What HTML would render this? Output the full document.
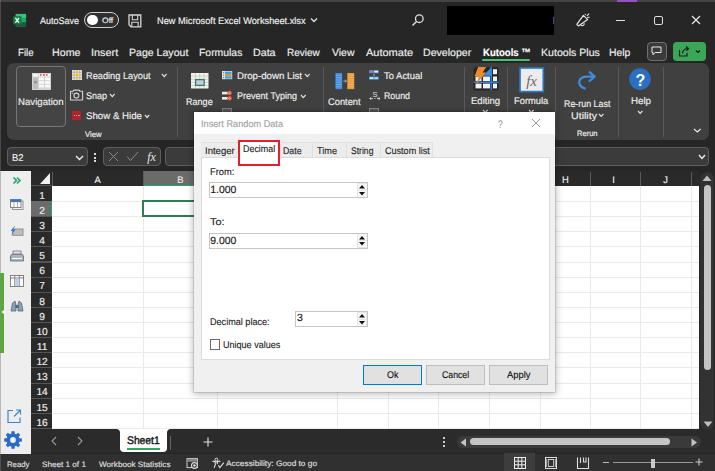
<!DOCTYPE html><html><head><meta charset="utf-8"><style>
html,body{margin:0;padding:0;width:715px;height:471px;overflow:hidden;background:#262626}
body{position:relative;font-family:"Liberation Sans",sans-serif}
.t{position:absolute;white-space:nowrap;transform-origin:0 0;text-rendering:geometricPrecision}
.r{position:absolute}
svg.r{overflow:visible}
</style></head><body>
<div class="r" style="left:0px;top:0px;width:715px;height:63px;background:#262626"></div>
<div class="r" style="left:0px;top:0px;width:715px;height:1.6px;background:#444"></div>
<div class="r" style="left:617px;top:0px;width:20px;height:1.6px;background:#9a50c0"></div>
<svg class="r" style="left:13px;top:13px" width="14" height="14" viewBox="0 0 14 14"><rect x="2.7" y="0.9" width="10.4" height="12.5" rx="0.8" fill="#21a366"/><rect x="2.7" y="0.9" width="10.4" height="4.2" fill="#33c481"/><rect x="2.7" y="9.2" width="10.4" height="4.2" fill="#185c37"/><rect x="0.1" y="3.2" width="8.4" height="8.1" rx="0.6" fill="#107c41"/><path d="M2.4 5 L6 9.6 M6 5 L2.4 9.6" stroke="#fff" stroke-width="1.3"/></svg>
<div class="t" style="left:39.80px;top:17px;font-size:9.63px;line-height:9.63px;color:#ececec;transform:scaleX(0.934);-webkit-text-stroke:0.18px #ececec;">AutoSave</div>
<div class="r" style="left:84px;top:12.2px;width:34.5px;height:15.4px;border:1.3px solid #cfcfcf;border-radius:8px;box-sizing:border-box;background:#2f2f2f"></div>
<div class="r" style="left:87px;top:14.6px;width:10.6px;height:10.6px;background:#fff;border-radius:50%"></div>
<div class="t" style="left:101.80px;top:17px;font-size:7.76px;line-height:7.76px;color:#ececec;transform:scaleX(1.103);-webkit-text-stroke:0.18px #ececec;">Off</div>
<svg class="r" style="left:127.5px;top:13.5px" width="14" height="14" viewBox="0 0 14 14"><path d="M1 1 H12.8 V12.8 H3 L1 10.8 Z" fill="none" stroke="#d8d8d8" stroke-width="1.3"/><path d="M4.3 1 V5.8 H9.7 V1" fill="none" stroke="#d8d8d8" stroke-width="1.1"/><path d="M3.8 12.8 V8.2 H10.2 V12.8" fill="none" stroke="#d8d8d8" stroke-width="1.1"/></svg>
<div class="t" style="left:157.30px;top:17px;font-size:9.63px;line-height:9.63px;color:#ececec;transform:scaleX(0.959);-webkit-text-stroke:0.18px #ececec;">New Microsoft Excel Worksheet.xlsx</div>
<svg class="r" style="left:310px;top:17px" width="8" height="6" viewBox="0 0 8 6"><path d="M1 1.5 L4 4.5 L7 1.5" fill="none" stroke="#e0e0e0" stroke-width="1.3"/></svg>
<svg class="r" style="left:411px;top:13px" width="14" height="14" viewBox="0 0 14 14"><circle cx="8.3" cy="5.7" r="3.8" fill="none" stroke="#e0e0e0" stroke-width="1.3"/><path d="M5.5 8.5 L1.5 12.5" stroke="#e0e0e0" stroke-width="1.5"/></svg>
<div class="r" style="left:446.5px;top:6.3px;width:107px;height:28.5px;background:#000"></div>
<div class="r" style="left:553px;top:17px;width:1px;height:7px;background:#4a3ab8"></div>
<svg class="r" style="left:570px;top:8px" width="26" height="24" viewBox="570 8 26 24"><path d="M576.8 24.4 L583.4 15.4 L587.7 19.6 L578.4 25.9 Z" fill="none" stroke="#e6e6e6" stroke-width="1.2" stroke-linejoin="round"/><path d="M580.6 24.6 A1.8 1.8 0 0 0 584 23.2" fill="none" stroke="#e6e6e6" stroke-width="1.1"/><path d="M585.2 14.2 L585.4 14.6 M587.2 15.6 L588.8 13.8 M587.6 17.5 L589.2 17.3" stroke="#e6e6e6" stroke-width="1.1" stroke-linecap="round"/></svg>
<div class="r" style="left:616px;top:19.6px;width:8.5px;height:1.2px;background:#e0e0e0"></div>
<div class="r" style="left:653.5px;top:16px;width:9px;height:9px;border:1.2px solid #e0e0e0;border-radius:2px;box-sizing:border-box"></div>
<svg class="r" style="left:691px;top:15px" width="10" height="10" viewBox="0 0 10 10"><path d="M1 1 L9 9 M9 1 L1 9" stroke="#e8e8e8" stroke-width="1.2"/></svg>
<div class="t" style="left:17.50px;top:49px;font-size:10.43px;line-height:10.43px;color:#ececec;transform:scaleX(0.929);-webkit-text-stroke:0.18px #ececec;">File</div>
<div class="t" style="left:52.00px;top:49px;font-size:10.43px;line-height:10.43px;color:#ececec;transform:scaleX(1.023);-webkit-text-stroke:0.18px #ececec;">Home</div>
<div class="t" style="left:91.30px;top:49px;font-size:10.43px;line-height:10.43px;color:#ececec;transform:scaleX(1.043);-webkit-text-stroke:0.18px #ececec;">Insert</div>
<div class="t" style="left:129.20px;top:49px;font-size:10.43px;line-height:10.43px;color:#ececec;transform:scaleX(1.014);-webkit-text-stroke:0.18px #ececec;">Page Layout</div>
<div class="t" style="left:199.40px;top:49px;font-size:10.43px;line-height:10.43px;color:#ececec;transform:scaleX(0.998);-webkit-text-stroke:0.18px #ececec;">Formulas</div>
<div class="t" style="left:253.40px;top:49px;font-size:10.43px;line-height:10.43px;color:#ececec;transform:scaleX(1.025);-webkit-text-stroke:0.18px #ececec;">Data</div>
<div class="t" style="left:287.40px;top:49px;font-size:10.43px;line-height:10.43px;color:#ececec;transform:scaleX(0.959);-webkit-text-stroke:0.18px #ececec;">Review</div>
<div class="t" style="left:331.50px;top:49px;font-size:10.43px;line-height:10.43px;color:#ececec;transform:scaleX(1.003);-webkit-text-stroke:0.18px #ececec;">View</div>
<div class="t" style="left:365.50px;top:49px;font-size:10.43px;line-height:10.43px;color:#ececec;transform:scaleX(1.055);-webkit-text-stroke:0.18px #ececec;">Automate</div>
<div class="t" style="left:423.30px;top:49px;font-size:10.43px;line-height:10.43px;color:#ececec;transform:scaleX(1.016);-webkit-text-stroke:0.18px #ececec;">Developer</div>
<div class="t" style="left:540.70px;top:49px;font-size:10.43px;line-height:10.43px;color:#ececec;transform:scaleX(1.017);-webkit-text-stroke:0.18px #ececec;">Kutools Plus</div>
<div class="t" style="left:609.30px;top:49px;font-size:10.43px;line-height:10.43px;color:#ececec;transform:scaleX(0.998);-webkit-text-stroke:0.18px #ececec;">Help</div>
<div class="t" style="left:482.80px;top:49px;font-size:10.43px;line-height:10.43px;color:#ffffff;font-weight:bold;transform:scaleX(0.919);-webkit-text-stroke:0.18px #ffffff;">Kutools ™</div>
<div class="r" style="left:482.2px;top:59.2px;width:48px;height:2.1px;background:#48bf6e;border-radius:1px"></div>
<div class="r" style="left:646.5px;top:41.5px;width:20px;height:19px;border:1.2px solid #707070;border-radius:4px;box-sizing:border-box;background:#3b3b3b"></div>
<svg class="r" style="left:651px;top:46px" width="11" height="10" viewBox="0 0 11 10"><path d="M1 1 H10 V6.5 H4 L2 8.8 V6.5 H1 Z" fill="none" stroke="#e8e8e8" stroke-width="1"/></svg>
<div class="r" style="left:673px;top:41.8px;width:32.5px;height:19px;background:#3aa757;border-radius:4px"></div>
<svg class="r" style="left:678px;top:44px" width="25" height="14" viewBox="0 0 25 14"><path d="M1.5 6 V12 H9 V9" fill="none" stroke="#1a1a1a" stroke-width="1.2"/><path d="M4.5 9.5 Q5 5 9.5 4.5 M8 2.5 L10.5 4.5 L8.5 6.8" fill="none" stroke="#1a1a1a" stroke-width="1.2"/><path d="M18 6.5 L20 8.5 L22 6.5" fill="none" stroke="#1a1a1a" stroke-width="1.2"/></svg>
<div class="r" style="left:7px;top:63px;width:701.5px;height:76.5px;background:#404040;border-radius:7px"></div>
<div class="r" style="left:16px;top:65.5px;width:50px;height:61px;border:1px solid #767676;border-radius:4px;box-sizing:border-box;background:#444"></div>
<svg class="r" style="left:31.5px;top:72.5px" width="19" height="17" viewBox="0 0 19 17"><rect x="0" y="0" width="19" height="17" fill="#d4d4d4"/><g fill="#f4f4f4"><rect x="1" y="1" width="5" height="2.6"/><rect x="7" y="1" width="5" height="2.6"/><rect x="13" y="1" width="5" height="2.6"/></g><g fill="#e04040"><rect x="8" y="1.2" width="1.5" height="1.5"/><rect x="11" y="1.2" width="1.5" height="1.5"/><rect x="14" y="1.2" width="1.5" height="1.5"/></g><g fill="#fafafa"><rect x="7" y="4.6" width="5" height="2.6"/><rect x="13" y="4.6" width="5" height="2.6"/><rect x="7" y="8.2" width="5" height="2.6"/><rect x="13" y="8.2" width="5" height="2.6"/><rect x="7" y="11.8" width="5" height="2.6"/><rect x="13" y="11.8" width="5" height="2.6"/></g><rect x="1" y="4.6" width="5" height="11.4" fill="#bcbcbc"/><circle cx="3.5" cy="9" r="1.3" fill="#8a8a8a"/></svg>
<div class="t" style="left:18.10px;top:98px;font-size:9.63px;line-height:9.63px;color:#ececec;transform:scaleX(1.002);-webkit-text-stroke:0.18px #ececec;">Navigation</div>
<svg class="r" style="left:71.5px;top:70px" width="10" height="10" viewBox="0 0 10 10"><rect x="0" y="0" width="10" height="10" fill="#e8e8ee"/><path d="M0 2.2 H10 M0 7.8 H10 M2.2 0 V10 M7.8 0 V10" stroke="#8a90b0" stroke-width="0.6"/><path d="M0 5 H10 M5 0 V10" stroke="#f0c030" stroke-width="1.6"/></svg>
<div class="t" style="left:86.40px;top:72px;font-size:9.63px;line-height:9.63px;color:#ececec;transform:scaleX(0.958);-webkit-text-stroke:0.18px #ececec;">Reading Layout</div>
<svg class="r" style="left:160.8px;top:73.2px" width="6.6" height="4.6" viewBox="160.8 73.2 6.6 4.6"><path d="M161.8 74.2 L164.10000000000002 76.8 L166.4 74.2" fill="none" stroke="#e0e0e0" stroke-width="1.2"/></svg>
<svg class="r" style="left:68px;top:88px" width="18" height="15" viewBox="68 88 18 15"><path d="M70.5 91.3 H73.2 L73.8 90.1 H79.2 L79.8 91.3 H82.6 V100 H70.5 Z" fill="none" stroke="#d4d4d4" stroke-width="1.1" stroke-linejoin="round"/><circle cx="76.4" cy="95.6" r="2.5" fill="none" stroke="#d4d4d4" stroke-width="1.1"/><circle cx="72.3" cy="93.2" r="0.6" fill="#d4d4d4"/></svg>
<div class="t" style="left:86.00px;top:92px;font-size:9.63px;line-height:9.63px;color:#ececec;transform:scaleX(0.934);-webkit-text-stroke:0.18px #ececec;">Snap</div>
<svg class="r" style="left:109.2px;top:92.7px" width="6.6" height="4.6" viewBox="109.2 92.7 6.6 4.6"><path d="M110.2 93.7 L112.5 96.3 L114.8 93.7" fill="none" stroke="#e0e0e0" stroke-width="1.2"/></svg>
<div class="r" style="left:72px;top:111.3px;width:9.3px;height:8.7px;background:#b3222c"></div>
<div class="r" style="left:74px;top:115px;width:1.3px;height:1.3px;background:#7fb0a0"></div>
<div class="r" style="left:76.2px;top:115px;width:1.3px;height:1.3px;background:#7fb0a0"></div>
<div class="r" style="left:78.4px;top:115px;width:1.3px;height:1.3px;background:#7fb0a0"></div>
<div class="t" style="left:86.00px;top:112px;font-size:9.63px;line-height:9.63px;color:#ececec;transform:scaleX(1.006);-webkit-text-stroke:0.18px #ececec;">Show &amp; Hide</div>
<svg class="r" style="left:144.2px;top:113.6px" width="6.2" height="4.5" viewBox="144.2 113.6 6.2 4.5"><path d="M145.2 114.6 L147.29999999999998 117.1 L149.39999999999998 114.6" fill="none" stroke="#e0e0e0" stroke-width="1.2"/></svg>
<div class="t" style="left:85.20px;top:131px;font-size:7.89px;line-height:7.89px;color:#ececec;transform:scaleX(0.973);-webkit-text-stroke:0.18px #ececec;">View</div>
<div class="r" style="left:176.8px;top:67px;width:1px;height:70px;background:#5a5a5a"></div>
<svg class="r" style="left:191px;top:73px" width="17.5" height="15.5" viewBox="0 0 17.5 15.5"><rect x="0" y="0" width="17.5" height="15.5" fill="#f2f2f2"/><path d="M0 3.1 H17.5 M0 6.2 H17.5 M0 9.3 H17.5 M0 12.4 H17.5 M4.4 0 V15.5 M8.8 0 V15.5 M13.1 0 V15.5" stroke="#c8b8b8" stroke-width="0.6"/><rect x="4.6" y="6.6" width="8.6" height="5.8" fill="#c8c8e0" stroke="#2a8a55" stroke-width="1.3"/></svg>
<div class="t" style="left:186.30px;top:98px;font-size:9.63px;line-height:9.63px;color:#ececec;transform:scaleX(0.941);-webkit-text-stroke:0.18px #ececec;">Range</div>
<svg class="r" style="left:222px;top:70.8px" width="10.2" height="8.2" viewBox="0 0 10.2 8.2"><rect x="0" y="0" width="10.2" height="8.2" fill="#e8e8e8"/><rect x="3" y="0.6" width="6.6" height="2.3" fill="#3aa0e8"/><rect x="3" y="2.9" width="6.6" height="2.4" fill="#d89a30"/><rect x="3" y="5.3" width="6.6" height="2.3" fill="#3aa0e8"/><path d="M0.8 1.7 H2.2 M0.8 4.1 H2.2 M0.8 6.5 H2.2" stroke="#555" stroke-width="0.8"/></svg>
<div class="t" style="left:236.80px;top:72px;font-size:9.63px;line-height:9.63px;color:#ececec;transform:scaleX(1.005);-webkit-text-stroke:0.18px #ececec;">Drop-down List</div>
<svg class="r" style="left:303.8px;top:73.3px" width="6.6" height="4.6" viewBox="303.8 73.3 6.6 4.6"><path d="M304.8 74.3 L307.1 76.89999999999999 L309.40000000000003 74.3" fill="none" stroke="#e0e0e0" stroke-width="1.2"/></svg>
<svg class="r" style="left:222px;top:90px" width="11" height="11" viewBox="0 0 11 11"><rect x="0" y="1.8" width="6" height="2.6" fill="#ececec"/><rect x="0" y="7" width="6" height="2.6" fill="#ececec"/><circle cx="7.6" cy="3.1" r="2.3" fill="#e0502c"/><circle cx="7.6" cy="8.3" r="2.3" fill="#e0502c"/><circle cx="7.6" cy="3.1" r="0.9" fill="none" stroke="#f8d0c0" stroke-width="0.6"/><circle cx="7.6" cy="8.3" r="0.9" fill="none" stroke="#f8d0c0" stroke-width="0.6"/></svg>
<div class="t" style="left:237.00px;top:92px;font-size:9.63px;line-height:9.63px;color:#ececec;transform:scaleX(0.936);-webkit-text-stroke:0.18px #ececec;">Prevent Typing</div>
<svg class="r" style="left:299.9px;top:93.8px" width="6.6" height="4.6" viewBox="299.9 93.8 6.6 4.6"><path d="M300.9 94.8 L303.2 97.39999999999999 L305.5 94.8" fill="none" stroke="#e0e0e0" stroke-width="1.2"/></svg>
<svg class="r" style="left:222px;top:108px" width="10" height="4" viewBox="0 0 10 4"><rect x="0.5" y="0.5" width="9" height="4" fill="#555" stroke="#8a8a8a" stroke-width="0.8"/></svg>
<div class="r" style="left:322.5px;top:67px;width:1px;height:70px;background:#5a5a5a"></div>
<svg class="r" style="left:335px;top:72.9px" width="20" height="16.2" viewBox="0 0 20 16.2"><rect x="0.5" y="0" width="6.6" height="16.2" fill="#3d8fe6"/><rect x="12.3" y="0" width="6.9" height="16.2" fill="#eb9a3a"/><path d="M0.5 2.30 H7 M13 2.30 H19.5 M0.5 4.60 H7 M13 4.60 H19.5 M0.5 6.90 H7 M13 6.90 H19.5 M0.5 9.20 H7 M13 9.20 H19.5 M0.5 11.50 H7 M13 11.50 H19.5 M0.5 13.80 H7 M13 13.80 H19.5" stroke="#ffffff" stroke-opacity="0.35" stroke-width="0.7"/><path d="M8.3 8.1 H11.5 M10.3 7 L11.5 8.1 L10.3 9.2" fill="none" stroke="#ccc" stroke-width="0.8"/></svg>
<div class="t" style="left:328.40px;top:98px;font-size:9.63px;line-height:9.63px;color:#ececec;transform:scaleX(0.966);-webkit-text-stroke:0.18px #ececec;">Content</div>
<svg class="r" style="left:368.7px;top:70.4px" width="10" height="10" viewBox="0 0 10 10"><rect x="0" y="0" width="9.8" height="3.3" fill="#3a8ee0"/><rect x="0.8" y="0.8" width="3.6" height="1.7" fill="#e86a4a"/><rect x="5.3" y="0.8" width="3.7" height="1.7" fill="#f0f0f0"/><rect x="0" y="6.5" width="9.8" height="3.3" fill="#3a8ee0"/><rect x="0.8" y="7.3" width="3.6" height="1.7" fill="#f0f0f0"/><rect x="5.3" y="7.3" width="3.7" height="1.7" fill="#c8d8f0"/><rect x="4.4" y="4.3" width="1.2" height="1.2" fill="#ddd"/></svg>
<div class="t" style="left:384.00px;top:72px;font-size:9.63px;line-height:9.63px;color:#ececec;transform:scaleX(0.982);-webkit-text-stroke:0.18px #ececec;">To Actual</div>
<svg class="r" style="left:368.5px;top:90px" width="12" height="11" viewBox="0 0 12 11"><text x="6" y="7" font-size="7.5" font-family="Liberation Sans" fill="#e0e0e0" text-anchor="middle">S</text><path d="M0.8 8.5 H3.8 M0.8 8.5 L2.2 7.3 M0.8 8.5 L2.2 9.7 M11 8.5 H8 M11 8.5 L9.6 7.3 M11 8.5 L9.6 9.7" fill="none" stroke="#ddd" stroke-width="0.9"/><rect x="5.4" y="8" width="1" height="1" fill="#ddd"/></svg>
<div class="t" style="left:384.00px;top:92px;font-size:9.63px;line-height:9.63px;color:#ececec;transform:scaleX(0.917);-webkit-text-stroke:0.18px #ececec;">Round</div>
<div class="r" style="left:369px;top:108px;width:10px;height:5px;border:1px solid #8a8a8a;background:#555;box-sizing:border-box"></div>
<div class="r" style="left:464.2px;top:67px;width:1px;height:70px;background:#5a5a5a"></div>
<svg class="r" style="left:472px;top:66px" width="28" height="26" viewBox="472 66 28 26"><rect x="473.6" y="67.2" width="25" height="23.3" rx="1.5" fill="#262626"/><g fill="#f2f2f2"><rect x="493" y="69.2" width="4" height="5"/><rect x="475.5" y="76.5" width="6" height="4.6"/><rect x="483" y="76.5" width="7" height="4.6"/><rect x="493" y="76.5" width="4" height="4.6"/><rect x="475.5" y="83.6" width="6" height="4.8"/><rect x="483" y="83.6" width="7" height="4.8"/><rect x="493" y="83.6" width="4" height="4.8"/></g><path d="M491.3 67.2 V90.5 M473.6 82.3 H498.6" stroke="#2f80d8" stroke-width="1.5"/><path d="M483 75.8 L491.3 67.5 L491.3 75.8 Z" fill="#3a8ee0"/><path d="M478.2 67 L486.2 67 L482.6 72.6 L486 72.6 L476 84.5 L479 76.2 L474.6 76.2 Z" fill="#ec8a2c"/></svg>
<div class="t" style="left:470.80px;top:97px;font-size:9.63px;line-height:9.63px;color:#ececec;transform:scaleX(0.991);-webkit-text-stroke:0.18px #ececec;">Editing</div>
<svg class="r" style="left:482px;top:109px" width="6.6" height="4.6" viewBox="482 109 6.6 4.6"><path d="M483 110 L485.3 112.6 L487.6 110" fill="none" stroke="#e0e0e0" stroke-width="1.2"/></svg>
<div class="r" style="left:507.3px;top:67px;width:1px;height:70px;background:#5a5a5a"></div>
<svg class="r" style="left:519px;top:66.5px" width="25.5" height="25.5" viewBox="0 0 25.5 25.5"><rect x="1" y="1" width="23.3" height="23.6" fill="#ececec" stroke="#2a78c8" stroke-width="1.7"/><text x="12.6" y="18.5" font-size="15" font-family="Liberation Serif" font-style="italic" fill="#6a6a6a" text-anchor="middle">fx</text></svg>
<div class="t" style="left:514.20px;top:97px;font-size:9.63px;line-height:9.63px;color:#ececec;transform:scaleX(0.971);-webkit-text-stroke:0.18px #ececec;">Formula</div>
<svg class="r" style="left:528px;top:109px" width="6.6" height="4.6" viewBox="528 109 6.6 4.6"><path d="M529 110 L531.3 112.6 L533.6 110" fill="none" stroke="#e0e0e0" stroke-width="1.2"/></svg>
<div class="r" style="left:555.4px;top:67px;width:1px;height:70px;background:#5a5a5a"></div>
<svg class="r" style="left:574px;top:69px" width="25" height="22" viewBox="574 69 25 22"><path d="M584.8 88.3 Q578.6 86.6 579.3 81.6 Q580.2 76.6 587.5 76.6 H593.5" fill="none" stroke="#3a8ee0" stroke-width="2.3" stroke-linecap="round"/><path d="M589.6 72.2 L594.6 76.6 L589.6 81" fill="none" stroke="#3a8ee0" stroke-width="2.3" stroke-linecap="round" stroke-linejoin="round"/></svg>
<div class="t" style="left:563.70px;top:100px;font-size:9.63px;line-height:9.63px;color:#ececec;transform:scaleX(0.922);-webkit-text-stroke:0.18px #ececec;">Re-run Last</div>
<div class="t" style="left:570.60px;top:112px;font-size:9.63px;line-height:9.63px;color:#ececec;transform:scaleX(1.104);-webkit-text-stroke:0.18px #ececec;">Utility</div>
<svg class="r" style="left:597.8px;top:113.2px" width="6.4" height="4.4" viewBox="597.8 113.2 6.4 4.4"><path d="M598.8 114.2 L601.0 116.60000000000001 L603.1999999999999 114.2" fill="none" stroke="#e0e0e0" stroke-width="1.2"/></svg>
<div class="t" style="left:577.10px;top:130px;font-size:7.89px;line-height:7.89px;color:#ececec;transform:scaleX(0.958);-webkit-text-stroke:0.18px #ececec;">Rerun</div>
<div class="r" style="left:618.2px;top:67px;width:1px;height:70px;background:#5a5a5a"></div>
<svg class="r" style="left:629px;top:68px" width="23" height="23" viewBox="0 0 23 23"><circle cx="11" cy="11.1" r="10.8" fill="#2b6fc2"/><text x="11.5" y="17.5" font-size="16" font-weight="bold" font-family="Liberation Sans" fill="#fff" text-anchor="middle">?</text></svg>
<div class="t" style="left:630.60px;top:97px;font-size:9.63px;line-height:9.63px;color:#ececec;transform:scaleX(1.011);-webkit-text-stroke:0.18px #ececec;">Help</div>
<svg class="r" style="left:636.7px;top:110px" width="6.4" height="4.3" viewBox="636.7 110 6.4 4.3"><path d="M637.7 111 L639.9000000000001 113.3 L642.1 111" fill="none" stroke="#e0e0e0" stroke-width="1.2"/></svg>
<div class="r" style="left:662.5px;top:67px;width:1px;height:70px;background:#5a5a5a"></div>
<svg class="r" style="left:693.3px;top:127.6px" width="8.6" height="5" viewBox="693.3 127.6 8.6 5"><path d="M694.3 128.6 L697.5999999999999 131.6 L700.9 128.6" fill="none" stroke="#e8e8e8" stroke-width="1.2"/></svg>
<div class="r" style="left:7px;top:147px;width:80.5px;height:19.3px;border:1px solid #5e5e5e;border-radius:4px;box-sizing:border-box;background:#3b3b3b"></div>
<div class="t" style="left:11.50px;top:154px;font-size:9.90px;line-height:9.90px;color:#ececec;transform:scaleX(0.948);-webkit-text-stroke:0.18px #ececec;">B2</div>
<svg class="r" style="left:75px;top:155px" width="9" height="6" viewBox="0 0 9 6"><path d="M1 1 L4.5 4.5 L8 1" fill="none" stroke="#eee" stroke-width="1.4"/></svg>
<div class="r" style="left:94px;top:153px;width:2px;height:2px;background:#ddd"></div>
<div class="r" style="left:94px;top:156.5px;width:2px;height:2px;background:#ddd"></div>
<div class="r" style="left:94px;top:160px;width:2px;height:2px;background:#ddd"></div>
<div class="r" style="left:103px;top:147px;width:58px;height:19.3px;border:1px solid #5e5e5e;border-radius:4px;box-sizing:border-box;background:#3b3b3b"></div>
<svg class="r" style="left:107.5px;top:151px" width="11" height="11" viewBox="0 0 11 11"><path d="M1 1 L10 10 M10 1 L1 10" stroke="#8a8a8a" stroke-width="1"/></svg>
<svg class="r" style="left:125.5px;top:151px" width="13" height="11" viewBox="0 0 13 11"><path d="M1 5.5 L4.5 9.5 L12 1" fill="none" stroke="#8a8a8a" stroke-width="1"/></svg>
<svg class="r" style="left:144px;top:149px" width="15" height="15" viewBox="0 0 15 15"><text x="7.5" y="12" font-size="12" font-family="Liberation Serif" font-style="italic" fill="#e8e8e8" text-anchor="middle">fx</text></svg>
<div class="r" style="left:164.5px;top:147px;width:544px;height:19.3px;border:1px solid #5e5e5e;border-radius:4px;box-sizing:border-box;background:#3b3b3b"></div>
<svg class="r" style="left:698px;top:154px" width="8" height="6" viewBox="0 0 8 6"><path d="M1 1 L4 4.5 L7 1" fill="none" stroke="#eee" stroke-width="1.4"/></svg>
<div class="r" style="left:0px;top:170.5px;width:715px;height:283px;background:#262626"></div>
<div class="r" style="left:31px;top:171px;width:668px;height:15px;background:#2a2a2a"></div>
<div class="r" style="left:143px;top:171px;width:74px;height:15px;background:#6b6b6b"></div>
<div class="r" style="left:143px;top:184.8px;width:74px;height:1.8px;background:#21a366"></div>
<div class="r" style="left:142.5px;top:172px;width:1px;height:14px;background:#5a5a5a"></div>
<div class="r" style="left:216.5px;top:172px;width:1px;height:14px;background:#5a5a5a"></div>
<div class="r" style="left:336.5px;top:172px;width:1px;height:14px;background:#5a5a5a"></div>
<div class="r" style="left:387.5px;top:172px;width:1px;height:14px;background:#5a5a5a"></div>
<div class="r" style="left:437.5px;top:172px;width:1px;height:14px;background:#5a5a5a"></div>
<div class="r" style="left:488.5px;top:172px;width:1px;height:14px;background:#5a5a5a"></div>
<div class="r" style="left:539.5px;top:172px;width:1px;height:14px;background:#5a5a5a"></div>
<div class="r" style="left:589.5px;top:172px;width:1px;height:14px;background:#5a5a5a"></div>
<div class="r" style="left:640.2px;top:172px;width:1px;height:14px;background:#5a5a5a"></div>
<div class="r" style="left:691.4px;top:172px;width:1px;height:14px;background:#5a5a5a"></div>
<div class="t" style="left:94.50px;top:176px;font-size:9.36px;line-height:9.36px;color:#ececec;transform:scaleX(1.000);-webkit-text-stroke:0.18px #ececec;">A</div>
<div class="t" style="left:177.30px;top:176px;font-size:9.36px;line-height:9.36px;color:#ececec;transform:scaleX(1.000);-webkit-text-stroke:0.18px #ececec;">B</div>
<div class="t" style="left:274.00px;top:176px;font-size:9.36px;line-height:9.36px;color:#ececec;transform:scaleX(1.000);-webkit-text-stroke:0.18px #ececec;">C</div>
<div class="t" style="left:359.50px;top:176px;font-size:9.36px;line-height:9.36px;color:#ececec;transform:scaleX(1.000);-webkit-text-stroke:0.18px #ececec;">D</div>
<div class="t" style="left:410.00px;top:176px;font-size:9.36px;line-height:9.36px;color:#ececec;transform:scaleX(1.000);-webkit-text-stroke:0.18px #ececec;">E</div>
<div class="t" style="left:460.50px;top:176px;font-size:9.36px;line-height:9.36px;color:#ececec;transform:scaleX(1.000);-webkit-text-stroke:0.18px #ececec;">F</div>
<div class="t" style="left:511.50px;top:176px;font-size:9.36px;line-height:9.36px;color:#ececec;transform:scaleX(1.000);-webkit-text-stroke:0.18px #ececec;">G</div>
<div class="t" style="left:562.00px;top:176px;font-size:9.36px;line-height:9.36px;color:#ececec;transform:scaleX(1.000);-webkit-text-stroke:0.18px #ececec;">H</div>
<div class="t" style="left:612.30px;top:176px;font-size:9.36px;line-height:9.36px;color:#ececec;transform:scaleX(1.000);-webkit-text-stroke:0.18px #ececec;">I</div>
<div class="t" style="left:663.30px;top:176px;font-size:9.36px;line-height:9.36px;color:#ececec;transform:scaleX(1.000);-webkit-text-stroke:0.18px #ececec;">J</div>
<div class="r" style="left:51.5px;top:172px;width:1px;height:14px;background:#5a5a5a"></div>
<svg class="r" style="left:31px;top:171px" width="21" height="15" viewBox="0 0 21 15"><path d="M19 2 L19 13 L9 13 Z" fill="#f0f0f0"/></svg>
<div class="r" style="left:52px;top:186px;width:647px;height:242.4px;background:#fff"></div>
<div class="r" style="left:52px;top:200.98499999999999px;width:647px;height:1px;background:#eaeaea"></div>
<div class="r" style="left:52px;top:216.12px;width:647px;height:1px;background:#eaeaea"></div>
<div class="r" style="left:52px;top:231.255px;width:647px;height:1px;background:#eaeaea"></div>
<div class="r" style="left:52px;top:246.39px;width:647px;height:1px;background:#eaeaea"></div>
<div class="r" style="left:52px;top:261.525px;width:647px;height:1px;background:#eaeaea"></div>
<div class="r" style="left:52px;top:276.65999999999997px;width:647px;height:1px;background:#eaeaea"></div>
<div class="r" style="left:52px;top:291.79499999999996px;width:647px;height:1px;background:#eaeaea"></div>
<div class="r" style="left:52px;top:306.93px;width:647px;height:1px;background:#eaeaea"></div>
<div class="r" style="left:52px;top:322.065px;width:647px;height:1px;background:#eaeaea"></div>
<div class="r" style="left:52px;top:337.2px;width:647px;height:1px;background:#eaeaea"></div>
<div class="r" style="left:52px;top:352.335px;width:647px;height:1px;background:#eaeaea"></div>
<div class="r" style="left:52px;top:367.47px;width:647px;height:1px;background:#eaeaea"></div>
<div class="r" style="left:52px;top:382.605px;width:647px;height:1px;background:#eaeaea"></div>
<div class="r" style="left:52px;top:397.74px;width:647px;height:1px;background:#eaeaea"></div>
<div class="r" style="left:52px;top:412.875px;width:647px;height:1px;background:#eaeaea"></div>
<div class="r" style="left:52px;top:428.01px;width:647px;height:1px;background:#eaeaea"></div>
<div class="r" style="left:142.5px;top:186px;width:1px;height:242.4px;background:#eaeaea"></div>
<div class="r" style="left:216.5px;top:186px;width:1px;height:242.4px;background:#eaeaea"></div>
<div class="r" style="left:336.5px;top:186px;width:1px;height:242.4px;background:#eaeaea"></div>
<div class="r" style="left:387.5px;top:186px;width:1px;height:242.4px;background:#eaeaea"></div>
<div class="r" style="left:437.5px;top:186px;width:1px;height:242.4px;background:#eaeaea"></div>
<div class="r" style="left:488.5px;top:186px;width:1px;height:242.4px;background:#eaeaea"></div>
<div class="r" style="left:539.5px;top:186px;width:1px;height:242.4px;background:#eaeaea"></div>
<div class="r" style="left:589.5px;top:186px;width:1px;height:242.4px;background:#eaeaea"></div>
<div class="r" style="left:640.2px;top:186px;width:1px;height:242.4px;background:#eaeaea"></div>
<div class="r" style="left:691.4px;top:186px;width:1px;height:242.4px;background:#eaeaea"></div>
<div class="r" style="left:31px;top:186px;width:21px;height:242.4px;background:#2a2a2a"></div>
<div class="r" style="left:31px;top:200.885px;width:21px;height:1.1px;background:#555"></div>
<div class="t" style="left:39.28px;top:192px;font-size:10.16px;line-height:10.16px;color:#ececec;transform:scaleX(1.000);-webkit-text-stroke:0.18px #ececec;">1</div>
<div class="r" style="left:31px;top:201.48499999999999px;width:21px;height:15.135px;background:#6b6b6b"></div>
<div class="r" style="left:50.5px;top:201.48499999999999px;width:1.5px;height:15.135px;background:#21a366"></div>
<div class="r" style="left:31px;top:216.01999999999998px;width:21px;height:1.1px;background:#555"></div>
<div class="t" style="left:39.28px;top:207px;font-size:10.16px;line-height:10.16px;color:#ececec;transform:scaleX(1.000);-webkit-text-stroke:0.18px #ececec;">2</div>
<div class="r" style="left:31px;top:231.155px;width:21px;height:1.1px;background:#555"></div>
<div class="t" style="left:39.28px;top:222px;font-size:10.16px;line-height:10.16px;color:#ececec;transform:scaleX(1.000);-webkit-text-stroke:0.18px #ececec;">3</div>
<div class="r" style="left:31px;top:246.29px;width:21px;height:1.1px;background:#555"></div>
<div class="t" style="left:39.28px;top:237px;font-size:10.16px;line-height:10.16px;color:#ececec;transform:scaleX(1.000);-webkit-text-stroke:0.18px #ececec;">4</div>
<div class="r" style="left:31px;top:261.42499999999995px;width:21px;height:1.1px;background:#555"></div>
<div class="t" style="left:39.28px;top:252px;font-size:10.16px;line-height:10.16px;color:#ececec;transform:scaleX(1.000);-webkit-text-stroke:0.18px #ececec;">5</div>
<div class="r" style="left:31px;top:276.55999999999995px;width:21px;height:1.1px;background:#555"></div>
<div class="t" style="left:39.28px;top:267px;font-size:10.16px;line-height:10.16px;color:#ececec;transform:scaleX(1.000);-webkit-text-stroke:0.18px #ececec;">6</div>
<div class="r" style="left:31px;top:291.69499999999994px;width:21px;height:1.1px;background:#555"></div>
<div class="t" style="left:39.28px;top:282px;font-size:10.16px;line-height:10.16px;color:#ececec;transform:scaleX(1.000);-webkit-text-stroke:0.18px #ececec;">7</div>
<div class="r" style="left:31px;top:306.8299999999999px;width:21px;height:1.1px;background:#555"></div>
<div class="t" style="left:39.28px;top:298px;font-size:10.16px;line-height:10.16px;color:#ececec;transform:scaleX(1.000);-webkit-text-stroke:0.18px #ececec;">8</div>
<div class="r" style="left:31px;top:321.965px;width:21px;height:1.1px;background:#555"></div>
<div class="t" style="left:39.28px;top:313px;font-size:10.16px;line-height:10.16px;color:#ececec;transform:scaleX(1.000);-webkit-text-stroke:0.18px #ececec;">9</div>
<div class="r" style="left:31px;top:337.09999999999997px;width:21px;height:1.1px;background:#555"></div>
<div class="t" style="left:36.46px;top:328px;font-size:10.16px;line-height:10.16px;color:#ececec;transform:scaleX(1.000);-webkit-text-stroke:0.18px #ececec;">10</div>
<div class="r" style="left:31px;top:352.23499999999996px;width:21px;height:1.1px;background:#555"></div>
<div class="t" style="left:36.82px;top:343px;font-size:10.16px;line-height:10.16px;color:#ececec;transform:scaleX(1.000);-webkit-text-stroke:0.18px #ececec;">11</div>
<div class="r" style="left:31px;top:367.36999999999995px;width:21px;height:1.1px;background:#555"></div>
<div class="t" style="left:36.46px;top:358px;font-size:10.16px;line-height:10.16px;color:#ececec;transform:scaleX(1.000);-webkit-text-stroke:0.18px #ececec;">12</div>
<div class="r" style="left:31px;top:382.505px;width:21px;height:1.1px;background:#555"></div>
<div class="t" style="left:36.46px;top:373px;font-size:10.16px;line-height:10.16px;color:#ececec;transform:scaleX(1.000);-webkit-text-stroke:0.18px #ececec;">13</div>
<div class="r" style="left:31px;top:397.64px;width:21px;height:1.1px;background:#555"></div>
<div class="t" style="left:36.46px;top:388px;font-size:10.16px;line-height:10.16px;color:#ececec;transform:scaleX(1.000);-webkit-text-stroke:0.18px #ececec;">14</div>
<div class="r" style="left:31px;top:412.775px;width:21px;height:1.1px;background:#555"></div>
<div class="t" style="left:36.46px;top:404px;font-size:10.16px;line-height:10.16px;color:#ececec;transform:scaleX(1.000);-webkit-text-stroke:0.18px #ececec;">15</div>
<div class="r" style="left:31px;top:427.90999999999997px;width:21px;height:1.1px;background:#555"></div>
<div class="t" style="left:36.46px;top:419px;font-size:10.16px;line-height:10.16px;color:#ececec;transform:scaleX(1.000);-webkit-text-stroke:0.18px #ececec;">16</div>
<div class="r" style="left:31px;top:185.3px;width:21px;height:1px;background:#555"></div>
<div class="r" style="left:142.2px;top:200.2px;width:76px;height:17.2px;border:2px solid #2f7d52;box-sizing:border-box"></div>
<div class="r" style="left:0px;top:170.5px;width:31px;height:283.5px;background:#eeeeee"></div>
<div class="r" style="left:0px;top:170.5px;width:1.2px;height:283.5px;background:#cfcfcf"></div>
<div class="r" style="left:0px;top:273px;width:4px;height:79.5px;background:#5aa83a"></div>
<svg class="r" style="left:1px;top:309px" width="4" height="6" viewBox="0 0 4 6"><path d="M3.5 0.5 L0.5 3 L3.5 5.5 Z" fill="#fff"/></svg>
<svg class="r" style="left:13px;top:177px" width="8" height="7" viewBox="0 0 8 7"><path d="M0.5 0.5 L3.5 3.5 L0.5 6.5 M4 0.5 L7 3.5 L4 6.5" fill="none" stroke="#21a366" stroke-width="1.6"/></svg>
<svg class="r" style="left:10px;top:198.5px" width="14" height="11" viewBox="0 0 14 11"><rect x="2.5" y="2" width="10.5" height="8.5" fill="#f4f4f4" stroke="#8a8a8a" stroke-width="0.9"/><rect x="0.5" y="0.5" width="10.5" height="8" fill="#fff" stroke="#7a7a7a" stroke-width="0.9"/><rect x="0.5" y="0.5" width="10.5" height="2.6" fill="#3c78c8"/><path d="M4 3.1 V8.5 M7.5 3.1 V8.5" stroke="#9a9a9a" stroke-width="0.8"/></svg>
<svg class="r" style="left:10px;top:225.5px" width="14" height="10" viewBox="0 0 14 10"><rect x="2.6" y="3" width="10.4" height="6.3" fill="#bdbdbd" stroke="#8a8a8a" stroke-width="0.9"/><path d="M4.6 0 L0.6 5 L2.8 5 L1.2 9.2 L5.6 3.6 L3.4 3.6 L5 0 Z" fill="#2f7fd3"/></svg>
<svg class="r" style="left:10px;top:250px" width="14" height="12" viewBox="0 0 14 12"><path d="M2 4 H12 L13.5 6 V11 H0.5 V6 Z" fill="#aab4c0" stroke="#667" stroke-width="0.8"/><rect x="3" y="1" width="8" height="3" fill="#dde" stroke="#667" stroke-width="0.7"/><rect x="2" y="8" width="10" height="1" fill="#fff"/></svg>
<svg class="r" style="left:10px;top:275px" width="14" height="12" viewBox="0 0 14 12"><rect x="0.5" y="0.5" width="13" height="11" fill="#fff" stroke="#777" stroke-width="0.9"/><path d="M4.8 0.5 V11.5 M9.2 0.5 V11.5 M0.5 3 H13.5" stroke="#777" stroke-width="0.9"/><rect x="5.2" y="3.5" width="3.6" height="7.5" fill="#b8d0ec"/></svg>
<svg class="r" style="left:10px;top:300px" width="14" height="12" viewBox="0 0 14 12"><path d="M1 11 L2.5 3 L5 1 L6 5 V11 Z M13 11 L11.5 3 L9 1 L8 5 V11 Z" fill="#8aa0b8" stroke="#556677" stroke-width="0.8"/><rect x="5.5" y="5" width="3" height="3" fill="#556677"/></svg>
<svg class="r" style="left:7px;top:408.5px" width="15" height="15" viewBox="0 0 15 15"><path d="M6 1.5 H1 V13.5 H13 V8.5" fill="none" stroke="#3a86d4" stroke-width="1.2"/><path d="M7 7.5 L13.5 1 M9 1 H13.5 V5.5" fill="none" stroke="#3a86d4" stroke-width="1.2"/></svg>
<svg class="r" style="left:4.4px;top:430.5px" width="18" height="18" viewBox="-9 -9 18 18"><g fill="#2b6cc4"><circle r="6.6"/><rect x="-1.7" y="-8.8" width="3.4" height="4" rx="0.5" transform="rotate(0)"/><rect x="-1.7" y="-8.8" width="3.4" height="4" rx="0.5" transform="rotate(45)"/><rect x="-1.7" y="-8.8" width="3.4" height="4" rx="0.5" transform="rotate(90)"/><rect x="-1.7" y="-8.8" width="3.4" height="4" rx="0.5" transform="rotate(135)"/><rect x="-1.7" y="-8.8" width="3.4" height="4" rx="0.5" transform="rotate(180)"/><rect x="-1.7" y="-8.8" width="3.4" height="4" rx="0.5" transform="rotate(225)"/><rect x="-1.7" y="-8.8" width="3.4" height="4" rx="0.5" transform="rotate(270)"/><rect x="-1.7" y="-8.8" width="3.4" height="4" rx="0.5" transform="rotate(315)"/></g><circle r="2.9" fill="#eee"/></svg>
<div class="r" style="left:700px;top:172px;width:14px;height:258px;background:#323232;border-radius:7px"></div>
<svg class="r" style="left:702px;top:175px" width="10" height="7" viewBox="0 0 10 7"><path d="M5 0.5 L9.5 6 L0.5 6 Z" fill="#bdbdbd"/></svg>
<div class="r" style="left:703.5px;top:184.8px;width:7.5px;height:185.5px;background:#c4c4c4;border-radius:4px"></div>
<svg class="r" style="left:702.5px;top:421px" width="10" height="7" viewBox="0 0 10 7"><path d="M0.5 0.5 L9.5 0.5 L5 6 Z" fill="#bdbdbd"/></svg>
<div class="r" style="left:31px;top:428.5px;width:684px;height:24.5px;background:#2b2b2b"></div>
<svg class="r" style="left:50px;top:436px" width="8" height="10" viewBox="0 0 8 10"><path d="M6 1 L2 5 L6 9" fill="none" stroke="#9a9a9a" stroke-width="1.1"/></svg>
<svg class="r" style="left:76px;top:436px" width="8" height="10" viewBox="0 0 8 10"><path d="M2 1 L6 5 L2 9" fill="none" stroke="#9a9a9a" stroke-width="1.1"/></svg>
<div class="r" style="left:119.5px;top:428.5px;width:47px;height:23px;background:#fff;border-radius:0 0 4px 4px"></div>
<div class="r" style="left:115.5px;top:428.5px;width:4px;height:4px;background:#fff"></div>
<div class="r" style="left:115.5px;top:428.5px;width:4px;height:4px;background:#2b2b2b;border-top-right-radius:4px"></div>
<div class="r" style="left:166.5px;top:428.5px;width:4px;height:4px;background:#fff"></div>
<div class="r" style="left:166.5px;top:428.5px;width:4px;height:4px;background:#2b2b2b;border-top-left-radius:4px"></div>
<div class="t" style="left:126.50px;top:436px;font-size:10.97px;line-height:10.97px;color:#1a1a1a;transform:scaleX(0.940);-webkit-text-stroke:0.45px #1a1a1a;">Sheet1</div>
<div class="r" style="left:126.5px;top:447.9px;width:33px;height:1.8px;background:#37a35c"></div>
<div class="r" style="left:169.5px;top:436px;width:1px;height:14px;background:#666"></div>
<svg class="r" style="left:202.5px;top:436.5px" width="10" height="10" viewBox="0 0 10 10"><path d="M5 0.5 V9.5 M0.5 5 H9.5" stroke="#e0e0e0" stroke-width="1.1"/></svg>
<div class="r" style="left:443px;top:437px;width:1.8px;height:1.8px;background:#ccc"></div>
<div class="r" style="left:443px;top:441px;width:1.8px;height:1.8px;background:#ccc"></div>
<div class="r" style="left:443px;top:445px;width:1.8px;height:1.8px;background:#ccc"></div>
<div class="r" style="left:457px;top:435.8px;width:244px;height:12px;background:#3a3a3a;border-radius:6px"></div>
<svg class="r" style="left:460px;top:437.5px" width="7" height="9" viewBox="0 0 7 9"><path d="M6 0.5 L6 8.5 L0.5 4.5 Z" fill="#c4c4c4"/></svg>
<div class="r" style="left:470px;top:437.7px;width:200px;height:7.5px;background:#c4c4c4;border-radius:4px"></div>
<svg class="r" style="left:690.5px;top:437.5px" width="7" height="9" viewBox="0 0 7 9"><path d="M0.5 0.5 L0.5 8.5 L6 4.5 Z" fill="#c4c4c4"/></svg>
<div class="r" style="left:31px;top:453.5px;width:684px;height:17.5px;background:#303030"></div>
<div class="r" style="left:0px;top:454px;width:31px;height:17px;background:#303030"></div>
<div class="t" style="left:7.30px;top:461px;font-size:7.89px;line-height:7.89px;color:#dcdcdc;transform:scaleX(0.987);-webkit-text-stroke:0.18px #dcdcdc;">Ready</div>
<div class="t" style="left:42.30px;top:461px;font-size:7.89px;line-height:7.89px;color:#dcdcdc;transform:scaleX(1.034);-webkit-text-stroke:0.18px #dcdcdc;">Sheet 1 of 1</div>
<div class="t" style="left:99.00px;top:461px;font-size:7.89px;line-height:7.89px;color:#dcdcdc;transform:scaleX(1.036);-webkit-text-stroke:0.18px #dcdcdc;">Workbook Statistics</div>
<svg class="r" style="left:184px;top:455px" width="16" height="16" viewBox="184 455 16 16"><rect x="187" y="458.6" width="10.4" height="9" fill="none" stroke="#d0d0d0" stroke-width="1"/><rect x="187.5" y="459.1" width="9.4" height="2.6" fill="#8a8a8a"/><circle cx="194.4" cy="465.5" r="2.9" fill="#303030" stroke="#d8d8d8" stroke-width="1.1"/><circle cx="194.4" cy="465.5" r="1.2" fill="#e0e0e0"/></svg>
<svg class="r" style="left:210px;top:456px" width="16" height="14" viewBox="210 456 16 14"><circle cx="216.4" cy="459.6" r="1.4" fill="none" stroke="#dedede" stroke-width="1"/><path d="M212.6 461.8 Q213.6 460.6 215 461.6 Q216.4 462.4 217.8 461.6 Q219.2 460.6 220.2 461.8" fill="none" stroke="#dedede" stroke-width="1.1"/><path d="M215 461.8 L215.4 464.6 L214 467.8 M217.6 461.8 L217.2 464.2" fill="none" stroke="#dedede" stroke-width="1.1"/><path d="M218.4 465.4 L219.9 467.6 L223.8 462.6" fill="none" stroke="#dedede" stroke-width="1.1"/></svg>
<div class="t" style="left:225.50px;top:460px;font-size:7.89px;line-height:7.89px;color:#dcdcdc;transform:scaleX(1.056);-webkit-text-stroke:0.18px #dcdcdc;">Accessibility: Good to go</div>
<div class="r" style="left:504.3px;top:453px;width:30.4px;height:18px;background:#3d3d3d"></div>
<svg class="r" style="left:513.5px;top:457px" width="12" height="12" viewBox="0 0 12 12"><rect x="0.5" y="0.5" width="11" height="11" fill="none" stroke="#eee" stroke-width="1"/><path d="M4.2 0.5 V11.5 M7.8 0.5 V11.5 M0.5 4.2 H11.5 M0.5 7.8 H11.5" stroke="#eee" stroke-width="1"/></svg>
<svg class="r" style="left:545px;top:457px" width="12" height="12" viewBox="0 0 12 12"><rect x="0.5" y="0.5" width="11" height="11" fill="none" stroke="#ddd" stroke-width="1"/><rect x="3.3" y="2.5" width="5.4" height="7" fill="none" stroke="#ddd" stroke-width="0.9"/><path d="M1.5 2 V10 M10.5 2 V10" stroke="#ddd" stroke-width="0.7"/></svg>
<svg class="r" style="left:577px;top:457px" width="12" height="12" viewBox="0 0 12 12"><path d="M0.5 0.5 V11.5 H11.5 V0.5 M3.5 0.5 V6 M6.5 0.5 V5 H9 V0.5" fill="none" stroke="#ddd" stroke-width="1.1"/></svg>
<div class="r" style="left:602.5px;top:461.9px;width:6.8px;height:1.2px;background:#bbb"></div>
<div class="r" style="left:613px;top:461.9px;width:79.5px;height:1px;background:#999"></div>
<div class="r" style="left:651px;top:458.8px;width:4.4px;height:9.2px;background:#c8c8c8"></div>
<svg class="r" style="left:695px;top:458px" width="8" height="8" viewBox="0 0 8 8"><path d="M4 0.5 V7.5 M0.5 4 H7.5" stroke="#ccc" stroke-width="1.1"/></svg>
<div class="r" style="left:194px;top:112px;width:361.2px;height:280px;background:#f0f0f0;box-shadow:0 1px 7px 1px rgba(0,0,0,0.28);outline:1px solid rgba(0,0,0,0.10)"></div>
<div class="r" style="left:194px;top:112px;width:361.2px;height:22px;background:#fff"></div>
<div class="t" style="left:200.60px;top:120px;font-size:9.73px;line-height:9.73px;color:#a0a0a0;transform:scaleX(0.943);-webkit-text-stroke:0.12px #a0a0a0;">Insert Random Data</div>
<div class="t" style="left:497.60px;top:120px;font-size:11.28px;line-height:11.28px;color:#8a8a8a;transform:scaleX(0.735);">?</div>
<svg class="r" style="left:532px;top:119px" width="8" height="8" viewBox="0 0 8 8"><path d="M0 0 L8 8 M8 0 L0 8" stroke="#8a8a8a" stroke-width="0.9"/></svg>
<div class="r" style="left:201px;top:142px;width:231px;height:15px;background:#ececec;border-top:1px solid #e0e0e0;box-sizing:border-box"></div>
<div class="r" style="left:238px;top:142px;width:1px;height:15px;background:#e0e0e0"></div>
<div class="r" style="left:280px;top:142px;width:1px;height:15px;background:#e0e0e0"></div>
<div class="r" style="left:312px;top:142px;width:1px;height:15px;background:#e0e0e0"></div>
<div class="r" style="left:346px;top:142px;width:1px;height:15px;background:#e0e0e0"></div>
<div class="r" style="left:380px;top:142px;width:1px;height:15px;background:#e0e0e0"></div>
<div class="r" style="left:431.5px;top:142px;width:1px;height:15px;background:#e0e0e0"></div>
<div class="r" style="left:200.5px;top:156.5px;width:349.5px;height:203px;background:#fff;border:1px solid #dcdcdc;box-sizing:border-box"></div>
<div class="r" style="left:238.5px;top:139.5px;width:41.5px;height:20px;background:#fff"></div>
<div class="t" style="left:205.30px;top:147px;font-size:9.73px;line-height:9.73px;color:#222;transform:scaleX(0.980);-webkit-text-stroke:0.12px #222;">Integer</div>
<div class="t" style="left:243.00px;top:145px;font-size:9.73px;line-height:9.73px;color:#222;transform:scaleX(0.917);-webkit-text-stroke:0.12px #222;">Decimal</div>
<div class="t" style="left:282.60px;top:147px;font-size:9.73px;line-height:9.73px;color:#222;transform:scaleX(0.906);-webkit-text-stroke:0.12px #222;">Date</div>
<div class="t" style="left:317.40px;top:147px;font-size:9.73px;line-height:9.73px;color:#222;transform:scaleX(0.941);-webkit-text-stroke:0.12px #222;">Time</div>
<div class="t" style="left:350.70px;top:147px;font-size:9.73px;line-height:9.73px;color:#222;transform:scaleX(0.882);-webkit-text-stroke:0.12px #222;">String</div>
<div class="t" style="left:385.00px;top:147px;font-size:9.73px;line-height:9.73px;color:#222;transform:scaleX(0.931);-webkit-text-stroke:0.12px #222;">Custom list</div>
<div class="r" style="left:238.3px;top:139.9px;width:41.5px;height:26.5px;border:2px solid #e81c2c;box-sizing:border-box"></div>
<div class="t" style="left:209.60px;top:168px;font-size:9.73px;line-height:9.73px;color:#222;transform:scaleX(0.961);-webkit-text-stroke:0.12px #222;">From:</div>
<div class="r" style="left:208.8px;top:182.1px;width:159.3px;height:16.3px;background:#fff;border:1px solid #c5c5c5;box-sizing:border-box"></div>
<div class="r" style="left:357.1px;top:183.1px;width:10px;height:14.3px;background:#e6e6e6"></div>
<div class="r" style="left:358.1px;top:183.6px;width:8.5px;height:6.15px;background:#f7f7f7"></div>
<div class="r" style="left:358.1px;top:190.75px;width:8.5px;height:6.15px;background:#f7f7f7"></div>
<svg class="r" style="left:359.1px;top:185.1px" width="6" height="3.5" viewBox="0 0 6 3.5"><path d="M3 0 L6 3.5 L0 3.5 Z" fill="#111"/></svg>
<svg class="r" style="left:359.1px;top:191.9px" width="6" height="3.5" viewBox="0 0 6 3.5"><path d="M0 0 L6 0 L3 3.5 Z" fill="#111"/></svg>
<div class="t" style="left:210.20px;top:186px;font-size:10.43px;line-height:10.43px;color:#111;transform:scaleX(1.000);-webkit-text-stroke:0.12px #111;">1.000</div>
<div class="t" style="left:209.60px;top:218px;font-size:9.73px;line-height:9.73px;color:#222;transform:scaleX(1.124);-webkit-text-stroke:0.12px #222;">To:</div>
<div class="r" style="left:208.8px;top:232.5px;width:159.3px;height:16.0px;background:#fff;border:1px solid #c5c5c5;box-sizing:border-box"></div>
<div class="r" style="left:357.1px;top:233.5px;width:10px;height:14.0px;background:#e6e6e6"></div>
<div class="r" style="left:358.1px;top:234.0px;width:8.5px;height:6.0px;background:#f7f7f7"></div>
<div class="r" style="left:358.1px;top:241.0px;width:8.5px;height:6.0px;background:#f7f7f7"></div>
<svg class="r" style="left:359.1px;top:235.5px" width="6" height="3.5" viewBox="0 0 6 3.5"><path d="M3 0 L6 3.5 L0 3.5 Z" fill="#111"/></svg>
<svg class="r" style="left:359.1px;top:242.0px" width="6" height="3.5" viewBox="0 0 6 3.5"><path d="M0 0 L6 0 L3 3.5 Z" fill="#111"/></svg>
<div class="t" style="left:210.20px;top:237px;font-size:10.43px;line-height:10.43px;color:#111;transform:scaleX(1.000);-webkit-text-stroke:0.12px #111;">9.000</div>
<div class="t" style="left:209.60px;top:318px;font-size:9.73px;line-height:9.73px;color:#222;transform:scaleX(0.935);-webkit-text-stroke:0.12px #222;">Decimal place:</div>
<div class="r" style="left:294.5px;top:311.3px;width:73px;height:16px;background:#fff;border:1px solid #c5c5c5;box-sizing:border-box"></div>
<div class="r" style="left:356.5px;top:312.3px;width:10px;height:14px;background:#e6e6e6"></div>
<div class="r" style="left:357.5px;top:312.8px;width:8.5px;height:6.0px;background:#f7f7f7"></div>
<div class="r" style="left:357.5px;top:319.8px;width:8.5px;height:6.0px;background:#f7f7f7"></div>
<svg class="r" style="left:358.5px;top:314.3px" width="6" height="3.5" viewBox="0 0 6 3.5"><path d="M3 0 L6 3.5 L0 3.5 Z" fill="#111"/></svg>
<svg class="r" style="left:358.5px;top:320.8px" width="6" height="3.5" viewBox="0 0 6 3.5"><path d="M0 0 L6 0 L3 3.5 Z" fill="#111"/></svg>
<div class="t" style="left:297.00px;top:314px;font-size:10.43px;line-height:10.43px;color:#111;transform:scaleX(1.000);-webkit-text-stroke:0.12px #111;">3</div>
<div class="r" style="left:210.2px;top:339.4px;width:9.6px;height:10.2px;border:1px solid #6a6a6a;background:#fff;box-sizing:border-box"></div>
<div class="t" style="left:223.20px;top:341px;font-size:9.73px;line-height:9.73px;color:#222;transform:scaleX(0.930);-webkit-text-stroke:0.12px #222;">Unique values</div>
<div class="r" style="left:362.7px;top:365px;width:59px;height:19.5px;background:#e1e1e1;border:1.5px solid #0078d7;box-sizing:border-box"></div>
<div class="r" style="left:426px;top:365px;width:59.4px;height:19.5px;background:#e1e1e1;border:1px solid #bdbdbd;box-sizing:border-box"></div>
<div class="r" style="left:489.1px;top:365px;width:59.3px;height:19.5px;background:#e1e1e1;border:1px solid #bdbdbd;box-sizing:border-box"></div>
<div class="t" style="left:386.50px;top:371px;font-size:9.73px;line-height:9.73px;color:#111;transform:scaleX(0.920);-webkit-text-stroke:0.12px #111;">Ok</div>
<div class="t" style="left:442.40px;top:371px;font-size:9.73px;line-height:9.73px;color:#111;transform:scaleX(0.897);-webkit-text-stroke:0.12px #111;">Cancel</div>
<div class="t" style="left:506.90px;top:371px;font-size:9.73px;line-height:9.73px;color:#111;transform:scaleX(0.966);-webkit-text-stroke:0.12px #111;">Apply</div>
<div class="r" style="left:0px;top:0px;width:1px;height:471px;background:rgba(140,140,140,0.35)"></div>
</body></html>
